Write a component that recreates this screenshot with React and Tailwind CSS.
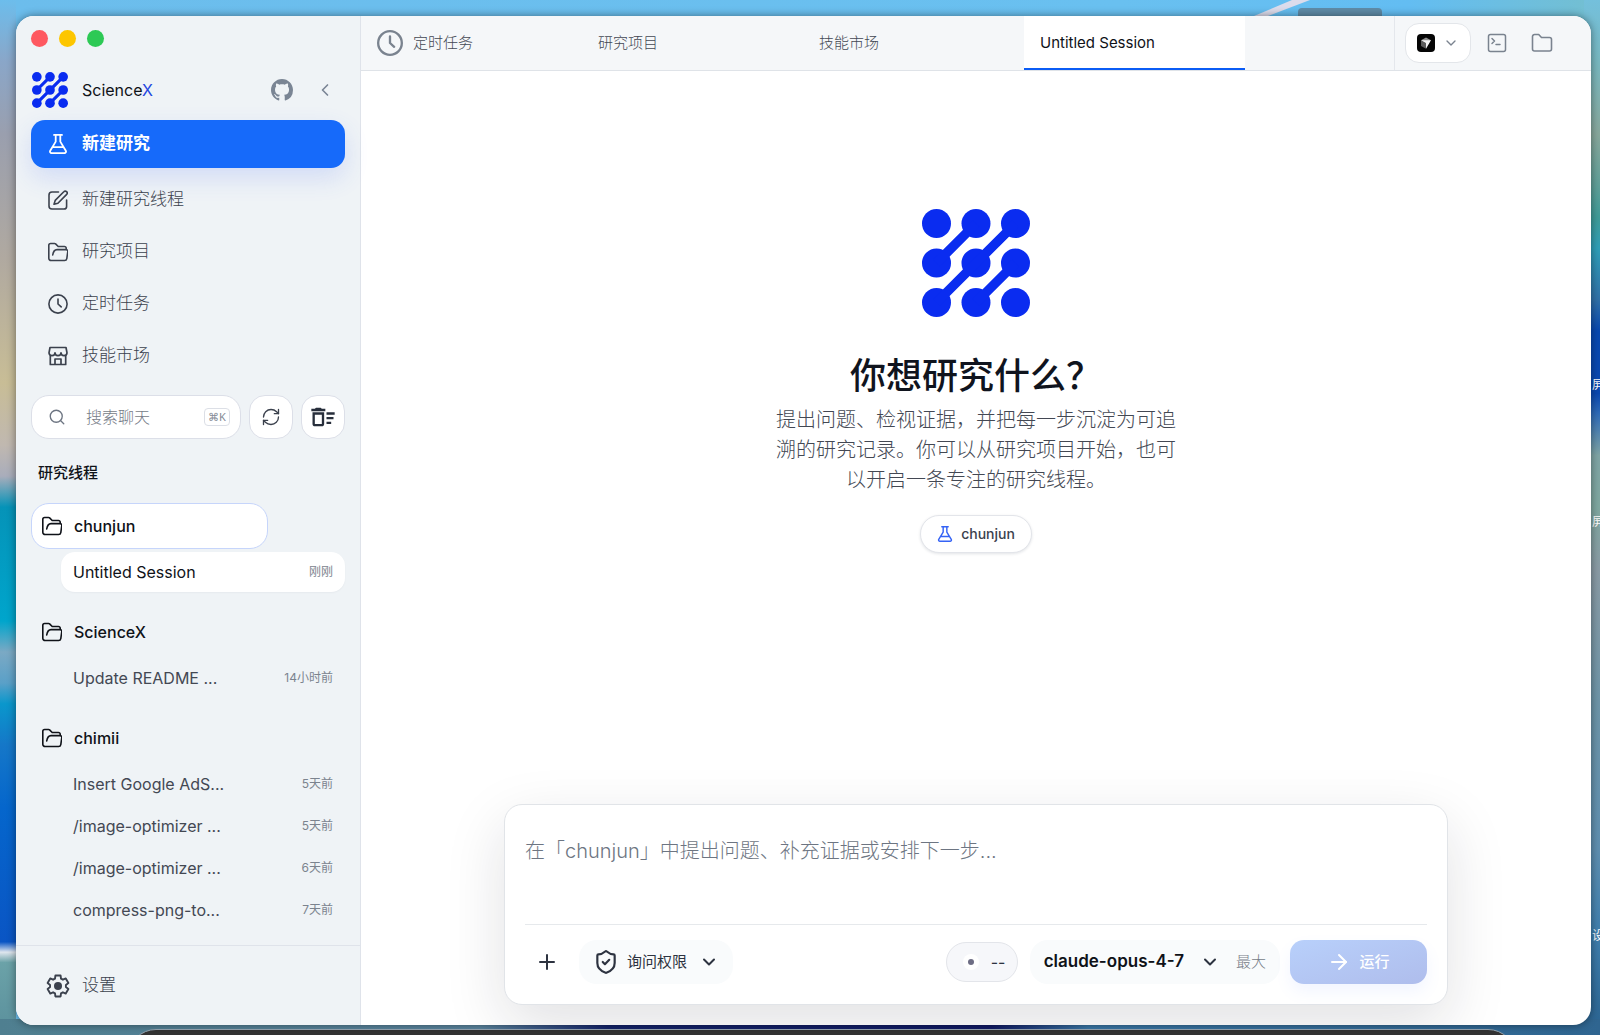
import React from "react";
import {
  ArrowRight,
  ChevronDown,
  ChevronLeft,
  Plus,
  RefreshCw,
  Search,
  ShieldCheck,
} from "lucide-react";
import { MdOutlineDeleteSweep } from "react-icons/md";

const strokeProps = {
  fill: "none",
  stroke: "currentColor",
  strokeLinecap: "round",
  strokeLinejoin: "round",
};

function LogoMark({ className }) {
  const points = [14.5, 54, 93.5];

  return (
    <svg className={className} viewBox="0 0 108 108" fill="#0a2cf0" aria-hidden="true">
      {points.map((y) =>
        points.map((x) => <circle key={`${x}-${y}`} cx={x} cy={y} r="14.5" />)
      )}
      <path
        d="M54 14.5 14.5 54M93.5 14.5l-79 79M93.5 54 54 93.5"
        stroke="#0a2cf0"
        strokeWidth="9.5"
      />
    </svg>
  );
}

function GithubIcon({ className }) {
  return (
    <svg className={className} viewBox="0 0 16 16" fill="currentColor">
      <path d="M8 0C3.58 0 0 3.58 0 8c0 3.54 2.29 6.53 5.47 7.59.4.07.55-.17.55-.38 0-.19-.01-.82-.01-1.49-2.01.37-2.53-.49-2.69-.94-.09-.23-.48-.94-.82-1.13-.28-.15-.68-.52-.01-.53.63-.01 1.08.58 1.23.82.72 1.21 1.87.87 2.33.66.07-.52.28-.87.51-1.07-1.78-.2-3.64-.89-3.64-3.95 0-.87.31-1.59.82-2.15-.08-.2-.36-1.02.08-2.12 0 0 .67-.21 2.2.82.64-.18 1.32-.27 2-.27.68 0 1.36.09 2 .27 1.53-1.04 2.2-.82 2.2-.82.44 1.1.16 1.92.08 2.12.51.56.82 1.27.82 2.15 0 3.07-1.87 3.75-3.65 3.95.29.25.54.73.54 1.48 0 1.07-.01 1.93-.01 2.2 0 .21.15.46.55.38A8.013 8.013 0 0 0 16 8c0-4.42-3.58-8-8-8z" />
    </svg>
  );
}

function FlaskIcon({ className }) {
  return (
    <svg className={className} viewBox="2 2 20 20" strokeWidth="1.8" {...strokeProps}>
      <path d="M8 2.9h8M9.7 3v6.6L4.2 18.7a1.6 1.6 0 0 0 1.4 2.4h12.8a1.6 1.6 0 0 0 1.4-2.4L14.3 9.6V3M7 15.2h10" />
    </svg>
  );
}

function EditIcon({ className }) {
  return (
    <svg className={className} viewBox="2 2 20 20" strokeWidth="1.6" {...strokeProps}>
      <path d="M12.5 4H6a3 3 0 0 0-3 3v11a3 3 0 0 0 3 3h12a2.6 2.6 0 0 0 2.6-2.6V12" />
      <path d="M9.2 12.4 17.8 3.8a1.9 1.9 0 0 1 2.9 2.6l-8.8 8.9-3.9 1z" />
    </svg>
  );
}

function FolderOpenIcon({ className }) {
  return (
    <svg className={className} viewBox="2 2 20 20" strokeWidth="1.6" {...strokeProps}>
      <path d="M20.2 9.6V8.2a1.7 1.7 0 0 0-1.7-1.7h-6.3L9.6 3.9a1.5 1.5 0 0 0-1-.4H4.6A1.8 1.8 0 0 0 2.8 5.3v12.9a2.3 2.3 0 0 0 2.3 2.3h13.4a2.3 2.3 0 0 0 2.3-1.9l1-7a1.7 1.7 0 0 0-1.7-2H11c-2.6 0-3.8 2.2-4.3 5.4" />
    </svg>
  );
}

function ClockIcon({ className, strokeWidth = 1.6 }) {
  return (
    <svg className={className} viewBox="2 2 20 20" strokeWidth={strokeWidth} {...strokeProps}>
      <circle cx="12" cy="12" r="9.1" />
      <path d="M12 7v5l3.2 2.9" />
    </svg>
  );
}

function StoreIcon({ className }) {
  return (
    <svg className={className} viewBox="2 2 20 20" strokeWidth="1.7" {...strokeProps}>
      <path d="M4 3.5h16l1 5.3a3 2.8 0 0 1-6 0a3 2.8 0 0 1-6 0a3 2.8 0 0 1-6 0z" />
      <path d="M4.3 11.5v9h15.4v-9M9 20.5V15h6v5.5" />
    </svg>
  );
}

function TerminalIcon({ className }) {
  return (
    <svg className={className} viewBox="0 0 20 20" strokeWidth="1.5" {...strokeProps}>
      <rect x="1.5" y="1.5" width="17" height="17" rx="2" />
      <path d="m5 5.5 2.5 2.5L5 10.5M9 11.5h4" />
    </svg>
  );
}

function FolderIcon({ className }) {
  return (
    <svg className={className} viewBox="0 0 22 20" strokeWidth="1.6" {...strokeProps}>
      <path d="M1.5 3.5A2 2 0 0 1 3.5 1.5h4.2L10.5 4.5h8a2 2 0 0 1 2 2v9.5a2 2 0 0 1-2 2h-15a2 2 0 0 1-2-2z" />
    </svg>
  );
}

function GearIcon({ className }) {
  // Six square teeth, one of them pointing straight up
  const outline = [0, 60, 120, 180, 240, 300]
    .flatMap((angle) => [
      [angle - 22, 8],
      [angle - 14, 10.8],
      [angle + 14, 10.8],
      [angle + 22, 8],
    ])
    .map(([angle, r]) => {
      const rad = ((angle - 90) * Math.PI) / 180;
      return `${12 + r * Math.cos(rad)},${12 + r * Math.sin(rad)}`;
    })
    .join(" ");

  return (
    <svg className={className} viewBox="0 0 24 24" strokeWidth="1.9" {...strokeProps}>
      <polygon points={outline} />
      <circle cx="12" cy="12" r="4" fill="currentColor" stroke="none" />
    </svg>
  );
}

function EditorBadge({ className }) {
  return (
    <svg className={className} viewBox="0 0 18 18" aria-hidden="true">
      <rect width="18" height="18" rx="4" fill="#050505" />
      <path d="M9 3.5 14 6.2 9 9 4 6.2z" fill="#8f8f8f" />
      <path d="M4 6.2 9 9v5.8l-5-2.9z" fill="#5c5c5c" />
      <path d="M4 6.2h10L9 14.8V9z" fill="#f4f4f4" />
    </svg>
  );
}

const NAV_ITEMS = [
  { label: "新建研究线程", icon: EditIcon },
  { label: "研究项目", icon: FolderOpenIcon },
  { label: "定时任务", icon: ClockIcon },
  { label: "技能市场", icon: StoreIcon },
];

const THREADS = [
  {
    name: "chunjun",
    active: true,
    sessions: [{ title: "Untitled Session", time: "刚刚", active: true }],
  },
  {
    name: "ScienceX",
    sessions: [{ title: "Update README ...", time: "14小时前" }],
  },
  {
    name: "chimii",
    sessions: [
      { title: "Insert Google AdS...", time: "5天前" },
      { title: "/image-optimizer ...", time: "5天前" },
      { title: "/image-optimizer ...", time: "6天前" },
      { title: "compress-png-to...", time: "7天前" },
    ],
  },
];

const TABS = [
  { label: "定时任务", icon: ClockIcon },
  { label: "研究项目" },
  { label: "技能市场" },
  { label: "Untitled Session", active: true },
];

function Wallpaper() {
  return (
    <div className="absolute inset-0 overflow-hidden bg-[linear-gradient(90deg,#6cbdec,#69c0f0_70%,#63bdf2_88%,#74bfd0)]">
      <div className="absolute inset-y-0 left-0 w-4 bg-[linear-gradient(180deg,#6cbdec_0%,#8aa6c8_6%,#9a9fae_13%,#b0a9a0_25%,#c8bd96_37%,#c0b8b0_43%,#a9adbb_46%,#0593b8_49%,#00a5cc_60%,#7ba9c4_63%,#5aa0c8_66%,#0a97cc_68%,#1577c8_72%,#0566cc_78%,#0a55c4_91%,#dfe6ee_92%,#6ba2a8_93%,#5a8f9c_100%)]" />
      <div className="absolute inset-y-0 right-0 w-4 bg-[linear-gradient(180deg,#74c0dc_0%,#78b8c0_6%,#88a89c_13%,#5fa099_18%,#3f9c98_21%,#2f9fb8_24%,#3070a8_29%,#0848b0_32%,#0a48b0_38%,#2f6cb8_40%,#7fa5a5_44%,#7fa8a0_49%,#8a9ba5_55%,#6d95a8_68%,#5f8fb0_82%,#3f7fae_90%,#2a628f_100%)]" />
      <div className="absolute inset-x-0 bottom-0 h-4 bg-[linear-gradient(90deg,#4f7f90,#5b86a0_30%,#14246c_38%,#101a66_62%,#3a78a8_68%,#2f6590)]" />
      <svg className="absolute top-0 right-[290px] h-4 w-14" viewBox="0 0 56 16">
        <path d="M0 16h14L56 0H38z" fill="#dcdcec" />
      </svg>
      <div className="absolute top-2 right-[218px] h-4 w-[84px] rounded bg-[#5f8ca8]" />
      <div className="absolute -bottom-16 left-[128px] right-[84px] h-[70px] rounded-[28px] border border-[#9aa8b4] bg-[#333]" />
      {/* Desktop file names that run off the screen */}
      <span className="absolute top-[377px] -right-1 text-xs leading-4 text-white">屏</span>
      <span className="absolute top-[514px] -right-1 text-xs leading-4 text-white">屏</span>
      <span className="absolute top-[928px] -right-1 text-xs leading-4 text-white">设</span>
    </div>
  );
}

function Session({ title, time, active }) {
  return (
    <button
      type="button"
      className={
        active
          ? "ml-[30px] flex h-10 items-center justify-between rounded-[14px] bg-white px-3 text-[#0f1218] shadow-[0_1px_2px_rgba(20,30,60,0.04)]"
          : "ml-[30px] flex h-10 items-center justify-between rounded-[14px] px-3 text-[#434853]"
      }
    >
      <span className="text-base">{title}</span>
      <span className="text-xs text-[#7b838e]">{time}</span>
    </button>
  );
}

function ThreadGroup({ name, active, sessions }) {
  return (
    <section>
      <button
        type="button"
        className={
          active
            ? "flex h-[46px] w-[237px] items-center gap-3 rounded-[18px] border border-[#c6d5fb] bg-white px-[10px] font-medium text-[#0f1218]"
            : "flex h-[46px] w-[237px] items-center gap-3 rounded-[18px] border border-transparent px-[10px] font-medium text-[#0f1218]"
        }
      >
        <FolderOpenIcon className="h-5 w-5" />
        {name}
      </button>
      <div className="mt-[3px] flex flex-col gap-[2px]">
        {sessions.map((s, i) => (
          <Session key={i} {...s} />
        ))}
      </div>
    </section>
  );
}

function Sidebar() {
  return (
    <aside className="flex w-[345px] shrink-0 flex-col border-r border-[#dfe3ea] bg-[#eff3f6]">
      <div className="flex-1 px-[15px]">
        {/* Window controls */}
        <div className="flex gap-[11px] pt-[14px]">
          <span className="h-[17px] w-[17px] rounded-full bg-[#fe5860]" />
          <span className="h-[17px] w-[17px] rounded-full bg-[#fdc600]" />
          <span className="h-[17px] w-[17px] rounded-full bg-[#2dc955]" />
        </div>

        <div className="mt-[25px] flex h-9 items-center">
          <LogoMark className="ml-px h-9 w-9" />
          <span className="ml-[14px] flex-1 text-base text-[#0f1218]">
            Science<span className="text-[#2346e0]">X</span>
          </span>
          <a href="#github" aria-label="GitHub" className="mr-[22px] text-[#7a8594]">
            <GithubIcon className="h-[22px] w-[22px]" />
          </a>
          <button type="button" aria-label="收起侧边栏" className="mr-[10px] text-[#7a8594]">
            <ChevronLeft className="h-5 w-5" />
          </button>
        </div>

        <nav className="mt-3 flex flex-col gap-1">
          <button
            type="button"
            className="mb-1 flex h-12 items-center gap-[14px] rounded-[14px] bg-[#166afa] px-[17px] text-[17px] font-bold text-white shadow-[0_10px_24px_rgba(60,100,250,0.16)]"
          >
            <FlaskIcon className="h-5 w-5" />
            新建研究
          </button>
          {NAV_ITEMS.map(({ label, icon: Icon }) => (
            <button
              key={label}
              type="button"
              className="flex h-12 items-center gap-[14px] rounded-[14px] px-[17px] text-[17px] font-light text-[#3b414d]"
            >
              <Icon className="h-5 w-5" />
              {label}
            </button>
          ))}
        </nav>

        <div className="mt-[15px] flex gap-2">
          <label className="flex h-11 flex-1 items-center rounded-[18px] border border-[#dcdfe8] bg-white pr-[10px] pl-4">
            <Search className="h-[18px] w-[18px] shrink-0 text-[#6d7582]" strokeWidth={1.8} />
            <input
              type="text"
              aria-label="搜索聊天"
              placeholder="搜索聊天"
              className="ml-5 w-0 flex-1 bg-transparent text-base font-light outline-none placeholder:text-[#767c87]"
            />
            <kbd className="flex h-[18px] w-[26px] items-center justify-center rounded border border-[#dcdfe6] font-sans text-[11px] text-[#858b96]">
              ⌘K
            </kbd>
          </label>
          <button
            type="button"
            aria-label="刷新"
            className="flex h-11 w-11 items-center justify-center rounded-2xl border border-[#dcdfe8] bg-white text-[#3b414d]"
          >
            <RefreshCw className="h-5 w-5" strokeWidth={1.6} />
          </button>
          <button
            type="button"
            aria-label="批量删除"
            className="flex h-11 w-11 items-center justify-center rounded-2xl border border-[#dcdfe8] bg-white text-[#272e3b]"
          >
            <MdOutlineDeleteSweep className="h-7 w-7" />
          </button>
        </div>

        <h2 className="mt-6 pl-[7px] text-[15px] leading-5 font-medium text-[#0f1218]">
          研究线程
        </h2>
        <div className="mt-5 flex flex-col gap-[17px]">
          {THREADS.map((group) => (
            <ThreadGroup key={group.name} {...group} />
          ))}
        </div>
      </div>

      <div className="flex h-20 items-center border-t border-[#dfe3ea] px-[15px]">
        <button
          type="button"
          className="flex h-12 w-full items-center gap-3 px-[15px] text-[17px] font-light text-[#3b414d]"
        >
          <GearIcon className="h-6 w-6" />
          设置
        </button>
      </div>
    </aside>
  );
}

function TopBar() {
  return (
    <header className="flex h-[55px] border-b border-[#dfe3e8] bg-[#f5f7f9]">
      <div className="flex flex-1">
        {TABS.map(({ label, icon: Icon, active }) => (
          <button
            key={label}
            type="button"
            className={
              active
                ? "flex w-[221px] items-center border-y-2 border-t-transparent border-b-[#0b5cf5] bg-white px-4 text-[15px] text-[#0f1218]"
                : "flex w-[221px] items-center gap-[10px] border-y-2 border-transparent px-4 text-[15px] font-light text-[#434853]"
            }
          >
            {Icon && <Icon className="h-[26px] w-[26px] text-[#7a838f]" strokeWidth={1.8} />}
            {label}
          </button>
        ))}
      </div>
      <div className="flex items-center border-l border-[#e4e7ec] pr-[38px] pl-[10px] text-[#7a838f]">
        <button
          type="button"
          aria-label="打开编辑器"
          className="flex h-10 w-[66px] items-center justify-center gap-2 rounded-[14px] border border-[#e3e6ea] bg-white"
        >
          <EditorBadge className="h-[18px] w-[18px]" />
          <ChevronDown className="h-4 w-4" />
        </button>
        <button type="button" aria-label="终端" className="ml-4">
          <TerminalIcon className="h-5 w-5" />
        </button>
        <button type="button" aria-label="文件" className="ml-6">
          <FolderIcon className="h-5 w-[22px]" />
        </button>
      </div>
    </header>
  );
}

function Hero() {
  return (
    <div className="flex flex-1 flex-col items-center justify-center pb-[114px]">
      <LogoMark className="h-[108px] w-[108px]" />
      <h1 className="mt-9 text-4xl leading-[46px] font-medium text-[#10141e]">
        你想研究什么？
      </h1>
      <p className="mt-[6px] w-[400px] text-center text-xl leading-[30px] font-light text-[#434853]">
        提出问题、检视证据，并把每一步沉淀为可追溯的研究记录。你可以从研究项目开始，也可以开启一条专注的研究线程。
      </p>
      <button
        type="button"
        className="mt-5 flex h-[38px] items-center gap-2 rounded-full border border-[#e3e5ea] bg-white px-4 text-sm font-medium text-[#3b414d] shadow-[0_1px_3px_rgba(20,30,60,0.12)]"
      >
        <FlaskIcon className="h-4 w-4 text-[#3563f5]" />
        chunjun
      </button>
    </div>
  );
}

function Composer() {
  return (
    <form className="mx-auto mb-5 w-[944px] max-w-full rounded-[18px] border border-[#e1e4e8] bg-white px-5 pb-5 shadow-[0_20px_60px_rgba(20,24,40,0.13)]">
      <textarea
        aria-label="研究问题"
        placeholder="在「chunjun」中提出问题、补充证据或安排下一步..."
        className="mt-[31px] block h-[88px] w-full resize-none bg-transparent text-xl leading-[30px] font-light outline-none placeholder:text-[#6d7582]"
      />
      <div className="flex items-center border-t border-[#e6e9ec] pt-[15px] text-[#2d3340]">
        <button type="button" aria-label="添加" className="ml-[10px]">
          <Plus className="h-6 w-6" />
        </button>
        <button
          type="button"
          className="ml-5 flex h-11 items-center rounded-[18px] bg-[#f9fbfc] px-[14px] text-[15px]"
        >
          <ShieldCheck className="h-[26px] w-[26px]" />
          <span className="ml-2">询问权限</span>
          <ChevronDown className="ml-3 h-5 w-5" strokeWidth={2.4} />
        </button>

        <div className="ml-auto flex items-center">
          <span className="flex h-10 w-[72px] items-center gap-3 rounded-full border border-[#e3e5ea] bg-[#f6f7fa] pl-4 text-base">
            <span className="flex h-4 w-4 items-center justify-center rounded-full bg-white">
              <span className="h-[6px] w-[6px] rounded-full bg-[#6d6d84]" />
            </span>
            --
          </span>
          <button
            type="button"
            className="ml-3 flex h-11 items-center rounded-[18px] bg-[#f9fbfc] px-[14px]"
          >
            <span className="text-[17px] font-semibold text-[#0f1218]">claude-opus-4-7</span>
            <ChevronDown className="ml-4 h-5 w-5" strokeWidth={2.4} />
            <span className="ml-4 text-[15px] font-light text-[#767c87]">最大</span>
          </button>
          <button
            type="submit"
            className="ml-[10px] flex h-11 w-[137px] items-center justify-center gap-2 rounded-[14px] bg-linear-to-br from-[#b8d0fb] to-[#afbdec] text-[15px] font-medium text-white shadow-[0_8px_16px_rgba(90,130,250,0.08)]"
          >
            <ArrowRight className="h-6 w-6" />
            运行
          </button>
        </div>
      </div>
    </form>
  );
}

export default function App() {
  return (
    <div className="relative flex min-h-screen pt-4 pr-[9px] pb-[10px] pl-4 font-['Inter','Noto_Sans_CJK_SC',sans-serif]">
      <Wallpaper />
      <div className="relative flex flex-1 overflow-hidden rounded-[18px] bg-white shadow-[0_0_8px_rgba(0,0,0,0.45)]">
        <Sidebar />
        <main className="flex min-w-0 flex-1 flex-col">
          <TopBar />
          <Hero />
          <Composer />
        </main>
      </div>
    </div>
  );
}
